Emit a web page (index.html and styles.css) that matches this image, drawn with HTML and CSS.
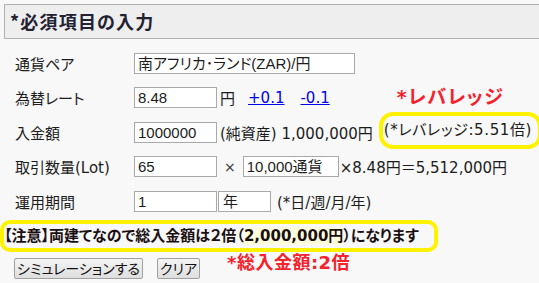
FILE: index.html
```html
<!DOCTYPE html>
<html lang="ja">
<head>
<meta charset="utf-8">
<link rel="stylesheet" href="styles.css">
</head>
<body>
<div class="page">
  <h2 class="title">*必須項目の入力</h2>
  <div class="form">
    <div class="row">
      <span class="label">通貨ペア</span>
      <span class="field wide">南アフリカ･ランド(ZAR)/円</span>
    </div>
    <div class="row">
      <span class="label">為替レート</span>
      <span class="field">8.48</span>
      <span class="unit">円</span>
      <a class="step" href="#">+0.1</a>
      <a class="step" href="#">-0.1</a>
      <span class="note-red note-lev">*レバレッジ</span>
    </div>
    <div class="row">
      <span class="label">入金額</span>
      <span class="field">1000000</span>
      <span class="unit">(純資産) 1,000,000円</span>
      <span class="ring">(*レバレッジ:5.51倍)</span>
    </div>
    <div class="row">
      <span class="label">取引数量(Lot)</span>
      <span class="field">65</span>
      <span class="times">×</span>
      <span class="field mid">10,000通貨</span>
      <span class="calc">×8.48円＝5,512,000円</span>
    </div>
    <div class="row">
      <span class="label">運用期間</span>
      <span class="field">1</span>
      <span class="field small">年</span>
      <span class="hint">(*日/週/月/年)</span>
    </div>
  </div>
  <div class="notice">【注意】両建てなので総入金額は２倍（<span class="hl">2,000,000円</span>）になります</div>
  <div class="actions">
    <button class="btn" type="button">シミュレーションする</button>
    <button class="btn" type="button">クリア</button>
    <span class="note-red note-total">*総入金額:2倍</span>
  </div>
</div>
</body>
</html>
```

FILE: styles.css
```css
html, body {
  margin: 0;
  padding: 0;
  background: #f8f8f8;
}
body {
  font-family: "DejaVu Sans", "Noto Sans CJK JP", sans-serif;
  font-size: 15px;
  color: #1c1c1c;
  font-feature-settings: "palt";
  overflow: hidden;
}
.page {
  width: 539px;
  height: 283px;
  position: relative;
}
.title {
  margin: 4px 0 0 4px;
  height: 33px;
  border: 1px solid #b0b0b0;
  border-right: none;
  background: #eeeeee;
  font-family: "Noto Sans CJK JP", sans-serif;
  font-size: 18px;
  font-weight: bold;
  color: #222233;
  line-height: 33px;
  padding-left: 5px;
  letter-spacing: 1.2px;
}
.form {
  padding-top: 7px;
}
.row {
  height: 34.5px;
  display: flex;
  align-items: center;
  white-space: nowrap;
}
.label {
  width: 119px;
  padding-left: 15px;
  flex: none;
  font-size: 15px;
}
.field {
  display: inline-block;
  box-sizing: border-box;
  width: 83px;
  height: 21px;
  line-height: 19px;
  border: 1px solid #a9a9a9;
  background: #fff;
  padding: 0 3px;
  font-family: "Liberation Sans", "Noto Sans CJK JP", sans-serif;
  font-size: 15px;
  flex: none;
  overflow: hidden;
}
.field.wide { width: 221px; }
.field.mid { width: 96px; }
.field.small { width: 53px; margin-left: 1px; padding-left: 4px; }
.unit {
  margin-left: 3px;
}
.step {
  color: #0000ee;
  text-decoration: underline;
  margin-left: 13px;
  font-family: "DejaVu Sans", sans-serif;
  font-size: 15px;
}
.step + .step {
  margin-left: 16px;
}
.note-red {
  color: #f5222d;
  font-weight: bold;
  font-family: "DejaVu Sans", "Noto Sans CJK JP", sans-serif;
}
.note-lev {
  margin-left: 67px;
  font-size: 19px;
  letter-spacing: 1.5px;
  margin-top: -4px;
}
.ring {
  margin-left: 6px;
  display: inline-block;
  border: 4px solid #fff200;
  border-radius: 14px;
  padding: 5px 6px 5px 1px;
  line-height: 19px;
  letter-spacing: 0.6px;
  margin-top: -3px;
}
.times {
  margin-left: 7px;
  margin-right: 7px;
  font-size: 14px;
  color: #333;
}
.calc {
  margin-left: 1px;
}
.hint {
  margin-left: 6px;
}
.notice {
  margin-top: 1px;
  width: 430px;
  height: 24px;
  border: 4px solid #fff200;
  border-radius: 10px;
  font-family: "DejaVu Sans", "Noto Sans CJK JP", sans-serif;
  font-weight: bold;
  font-size: 15px;
  line-height: 24px;
  letter-spacing: 0;
  color: #1a1012;
  white-space: nowrap;
  overflow: hidden;
}
.hl {
  background: #ffffe0;
}
.actions {
  display: flex;
  align-items: flex-start;
  padding-left: 14px;
  margin-top: 6px;
}
.btn {
  font-family: "Noto Sans CJK JP", sans-serif;
  font-feature-settings: "palt";
  font-size: 14px;
  height: 21px;
  line-height: 17px;
  padding: 0 2px;
  border: 1px solid #a0a0a0;
  border-radius: 2px;
  background: linear-gradient(#f4f4f4, #dedede);
  color: #111;
}
.btn + .btn {
  margin-left: 14px;
}
.note-total {
  font-size: 18px;
  letter-spacing: 0.5px;
  margin-left: 27px;
  margin-top: -10px;
}
```
